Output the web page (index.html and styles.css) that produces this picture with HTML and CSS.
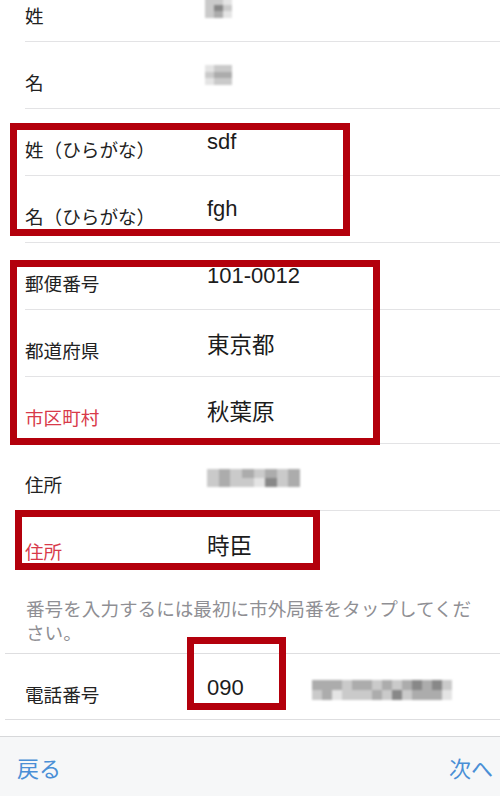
FILE: index.html
```html
<!DOCTYPE html>
<html lang="ja">
<head>
<meta charset="utf-8">
<title>入力フォーム</title>
<link rel="stylesheet" href="styles.css">
</head>
<body>
<div class="screen">
  <div class="list">
    <div class="row">
      <span class="label">姓</span>
      <span class="mosaic mo-sq">
        <i class="s2"></i><i class="s2"></i><i class="s1"></i>
        <i class="s2"></i><i class="s4"></i><i class="s2"></i>
        <i class="s2"></i><i class="s3"></i><i class="s1"></i>
      </span>
    </div>
    <div class="row">
      <span class="label">名</span>
      <span class="mosaic mo-sq">
        <i class="s1"></i><i class="s2"></i><i class="s2"></i>
        <i class="s2"></i><i class="s3"></i><i class="s3"></i>
        <i class="s1"></i><i class="s2"></i><i class="s2"></i>
      </span>
    </div>
    <div class="row">
      <span class="label">姓（ひらがな）</span>
      <span class="value latin">sdf</span>
    </div>
    <div class="row">
      <span class="label">名（ひらがな）</span>
      <span class="value latin">fgh</span>
    </div>
    <div class="row">
      <span class="label">郵便番号</span>
      <span class="value latin">101-0012</span>
    </div>
    <div class="row">
      <span class="label">都道府県</span>
      <span class="value">東京都</span>
    </div>
    <div class="row">
      <span class="label required">市区町村</span>
      <span class="value">秋葉原</span>
    </div>
    <div class="row">
      <span class="label">住所</span>
      <span class="mosaic mo-addr">
        <i class="s2"></i><i class="s3"></i><i class="s2"></i><i class="s3"></i><i class="s2"></i><i class="s3"></i><i class="s2"></i><i class="s3"></i>
        <i class="s2"></i><i class="s3"></i><i class="s2"></i><i class="s2"></i><i class="s1"></i><i class="s4"></i><i class="s2"></i><i class="s3"></i>
      </span>
    </div>
    <div class="row last">
      <span class="label required">住所</span>
      <span class="value">時臣</span>
    </div>
  </div>

  <p class="help">番号を入力するには最初に市外局番をタップしてください。</p>

  <div class="group">
    <div class="row phone">
      <span class="label">電話番号</span>
      <span class="value latin">090</span>
      <span class="mosaic mo-tel">
        <i class="s3"></i><i class="s3"></i><i class="s3"></i><i class="s2"></i><i class="s3"></i><i class="s3"></i><i class="s2"></i><i class="s3"></i><i class="s2"></i><i class="s3"></i><i class="s4"></i><i class="s3"></i><i class="s4"></i><i class="s2"></i>
        <i class="s2"></i><i class="s3"></i><i class="s1"></i><i class="s2"></i><i class="s2"></i><i class="s2"></i><i class="s3"></i><i class="s2"></i><i class="s4"></i><i class="s2"></i><i class="s3"></i><i class="s3"></i><i class="s3"></i><i class="s1"></i>
      </span>
    </div>
  </div>

  <div class="toolbar">
    <span class="tb-btn">戻る</span>
    <span class="tb-btn">次へ</span>
  </div>

  <div class="mark mark-kana"></div>
  <div class="mark mark-address"></div>
  <div class="mark mark-street"></div>
  <div class="mark mark-tel"></div>
</div>
</body>
</html>
```

FILE: styles.css
```css
* { box-sizing: border-box; }

html, body {
  margin: 0;
  padding: 0;
  background: #ffffff;
}

body {
  font-family: "Noto Sans CJK JP", "Noto Sans", sans-serif;
  color: #222222;
}

.screen {
  position: relative;
  width: 500px;
  height: 796px;
  overflow: hidden;
  display: flex;
  flex-direction: column;
  background: #ffffff;
}

.list {
  margin-top: -25px;
}

.row {
  display: flex;
  align-items: flex-start;
  height: 67px;
  margin-left: 25px;
  border-bottom: 1px solid #e3e3e5;
}

.row.last {
  height: 66px;
  border-bottom: none;
}

.label {
  flex: none;
  width: 182px;
  margin-top: 28px;
  font-size: 18.6px;
  line-height: 24px;
  color: #222222;
  white-space: nowrap;
}

.label.required {
  color: #d83a4a;
}

.value {
  margin-top: 19px;
  font-size: 22.5px;
  line-height: 28px;
  color: #1c1c1c;
  white-space: nowrap;
}

.value.latin {
  font-family: "Liberation Sans", Arial, sans-serif;
  font-size: 22px;
}

.mosaic {
  display: grid;
  margin-top: 23px;
  filter: blur(0.9px);
  margin-left: -2px;
}

.mosaic i {
  display: block;
}

.mo-sq {
  width: 27px;
  height: 20px;
  grid-template-columns: repeat(3, 1fr);
  grid-template-rows: repeat(3, 1fr);
}

.mo-addr {
  width: 93px;
  height: 18px;
  margin-left: 0;
  margin-top: 25px;
  grid-template-columns: repeat(8, 1fr);
  grid-template-rows: repeat(2, 1fr);
}

.mo-tel {
  width: 140px;
  height: 20px;
  margin-top: 26px;
  margin-left: 68px;
  grid-template-columns: repeat(14, 1fr);
  grid-template-rows: repeat(2, 1fr);
}

.s1 { background: #e4e4e4; }
.s2 { background: #cacaca; }
.s3 { background: #acacac; }
.s4 { background: #888888; }

.help {
  margin: 0;
  padding: 19px 19px 9px 26px;
  font-size: 18.6px;
  line-height: 24px;
  color: #8f8f94;
}

.group {
  margin-left: 5px;
  border-top: 1px solid #dedee0;
  border-bottom: 1px solid #dedee0;
}

.row.phone {
  height: 65px;
  margin-left: 0;
  padding-left: 20px;
  border-bottom: none;
}

.row.phone .value {
  margin-top: 20px;
}

.toolbar {
  margin-top: auto;
  height: 60px;
  display: flex;
  justify-content: space-between;
  align-items: center;
  padding: 0 7px 0 17px;
  background: #f6f7f8;
  border-top: 1px solid #d7d8da;
}

.tb-btn {
  font-size: 22px;
  line-height: 28px;
  color: #4a8fd6;
}

.mark {
  position: absolute;
  border: 7px solid #b3000c;
}

.mark-kana {
  left: 10px;
  top: 123px;
  width: 340px;
  height: 113px;
}

.mark-address {
  left: 10px;
  top: 260px;
  width: 370px;
  height: 185px;
}

.mark-street {
  left: 15px;
  top: 510px;
  width: 305px;
  height: 60px;
}

.mark-tel {
  left: 187px;
  top: 637px;
  width: 99px;
  height: 73px;
}
```
